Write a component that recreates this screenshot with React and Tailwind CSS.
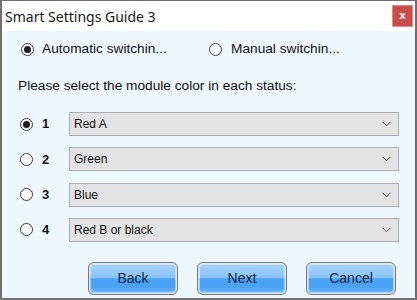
import { useState } from "react";

const options = ["Red A", "Green", "Blue", "Red B or black"];

function Radio({ checked, onClick }) {
  return (
    <span
      onClick={onClick}
      className="w-[13px] h-[13px] shrink-0 rounded-full border border-[#3c3c3c] bg-white flex items-center justify-center cursor-pointer"
    >
      {checked && <span className="w-[7px] h-[7px] rounded-full bg-[#1e1e1e]" />}
    </span>
  );
}

function Chevron() {
  return (
    <svg width="9" height="6" viewBox="0 0 9 6" className="shrink-0">
      <path d="M0.5 0.8 L4.5 4.8 L8.5 0.8" fill="none" stroke="#555" strokeWidth="1" />
    </svg>
  );
}

function Button({ children }) {
  return (
    <button className="w-[90px] h-[33px] rounded-[6px] border border-[#777] p-px bg-[#d8e8f6]">
      <span className="w-full h-full flex items-center justify-center rounded-[4px] bg-[linear-gradient(to_bottom,#a6d3fc_0%,#8ac4fa_46%,#4aa2f6_52%,#4aa2f6_80%,#72baf8_100%)] shadow-[inset_0_0_0_1px_rgba(255,255,255,0.45)] text-[14px] text-[#10243a]">
        {children}
      </span>
    </button>
  );
}

export default function App() {
  const [mode, setMode] = useState("auto");
  const [status, setStatus] = useState(0);

  return (
    <div className="w-[417px] h-[300px] bg-[#707070] pt-px px-[2px] pb-[2px] flex flex-col font-['Liberation_Sans',Arial,sans-serif]">
      {/* Title bar */}
      <div className="h-[30px] bg-white flex items-center justify-between pl-[3px] pr-[2px]">
        <span className="text-[14px] text-[#1a1a1a] font-['Noto_Sans',sans-serif]">
          Smart Settings Guide 3
        </span>
        <span className="w-[21px] h-[22px] bg-[#c94f4f] border border-[#dd8a8a] flex items-center justify-center text-white text-[11px] font-bold leading-none pb-px">
          x
        </span>
      </div>

      {/* Content */}
      <div className="flex-1 bg-[#eef6fe] pt-[11px] text-[13.7px] text-[#111]">
        <div className="h-[14px] flex items-center pl-[19px]">
          <div className="w-[188px] flex items-center gap-[8px]">
            <Radio checked={mode === "auto"} onClick={() => setMode("auto")} />
            <span>Automatic switchin...</span>
          </div>
          <div className="flex items-center gap-[9px]">
            <Radio checked={mode === "manual"} onClick={() => setMode("manual")} />
            <span>Manual switchin...</span>
          </div>
        </div>

        <p className="mt-[22px] h-[16px] leading-[16px] pl-[16px]">
          Please select the module color in each status:
        </p>

        <div className="mt-[18px] flex flex-col gap-[11.3px] pl-[18px]">
          {options.map((opt, i) => (
            <div key={opt} className="h-[24px] flex items-center">
              <Radio checked={status === i} onClick={() => setStatus(i)} />
              <span className="ml-[9px] w-[27px] font-bold text-[13px]">{i + 1}</span>
              <div className="w-[330px] h-[24px] bg-[#e3e3e3] border border-[#acacac] flex items-center justify-between pl-[4px] pr-[7px] text-[12px]">
                <span>{opt}</span>
                <Chevron />
              </div>
            </div>
          ))}
        </div>

        <div className="mt-[20px] flex pl-[86px] gap-[19px]">
          <Button>Back</Button>
          <Button>Next</Button>
          <Button>Cancel</Button>
        </div>
      </div>
    </div>
  );
}
